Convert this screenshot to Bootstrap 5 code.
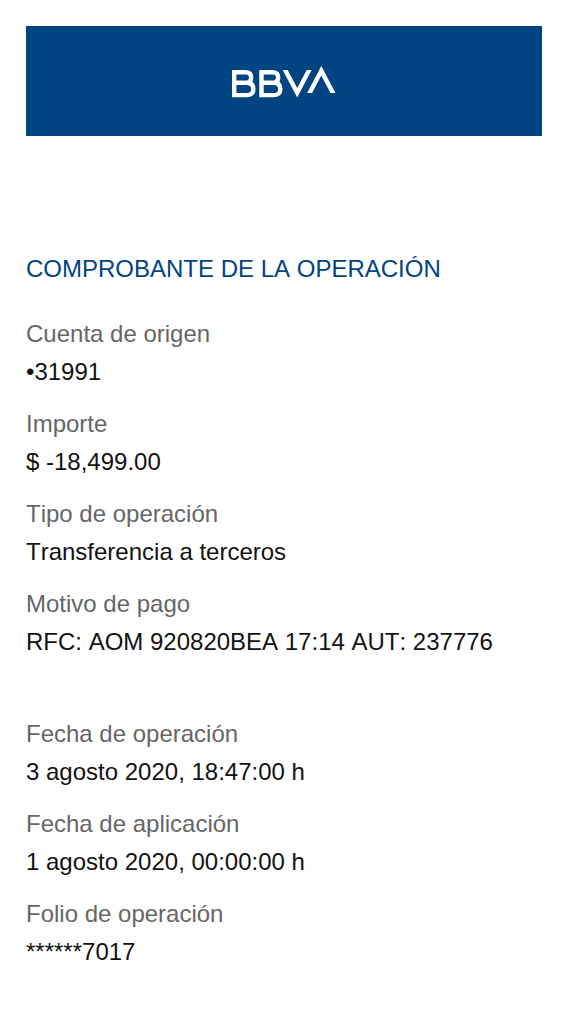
<!DOCTYPE html>
<html lang="es">
<head>
<meta charset="utf-8">
<meta name="viewport" content="width=device-width, initial-scale=1">
<title>Comprobante de la operación</title>
<link href="https://cdn.jsdelivr.net/npm/bootstrap@5.3.0/dist/css/bootstrap.min.css" rel="stylesheet">
<style>
body { font-family: "Liberation Sans", Arial, sans-serif; font-size: 24px; line-height: 38px; font-kerning: none; color: #121212; background: #fff; }
.receipt { padding: 26px; }
.brand-bar { background: #004481; padding: 40px 0 38px; margin-bottom: 114px; }
.receipt-title { font-size: 24px; line-height: 38px; font-weight: 400; color: #004481; margin-bottom: 27px; }
.details dt { font-weight: 400; color: #666; line-height: 38px; }
.details dd { margin-bottom: 14px; }
.details .section-end { margin-bottom: 54px; }
</style>
</head>
<body>
<main class="receipt container-fluid">
  <header class="brand-bar d-flex justify-content-center">
    <svg width="106" height="32" viewBox="0 0 106 32" role="img" aria-label="BBVA" fill="none" stroke="#fff" stroke-width="4.400">
      <defs>
        <clipPath id="clip-down"><rect x="50" y="4" width="34" height="28"/></clipPath>
        <clipPath id="clip-up"><rect x="74" y="0" width="32" height="27"/></clipPath>
      </defs>
      <path d="M3.200 6.200H14.500Q20.200 6.200 20.200 11.500T14.500 16.800H3.200M14.500 16.800H15.500Q22.300 16.800 22.300 23T15.500 29.100H3.200V4"/>
      <path d="M30.500 6.200H41.500Q47.200 6.200 47.200 11.500T41.500 16.800H30.500M41.500 16.800H42.500Q49.300 16.800 49.300 23T42.500 29.100H30.500V4"/>
      <path clip-path="url(#clip-down)" stroke-miterlimit="10" d="M52.100 0L66.200 26.700L80.300 0"/>
      <path clip-path="url(#clip-up)" stroke-miterlimit="10" d="M76.500 31L90.300 4.800L104.100 31"/>
    </svg>
  </header>
  <h1 class="receipt-title">COMPROBANTE DE LA OPERACIÓN</h1>
  <dl class="details mb-0">
    <dt>Cuenta de origen</dt>
    <dd>•31991</dd>
    <dt>Importe</dt>
    <dd>$ -18,499.00</dd>
    <dt>Tipo de operación</dt>
    <dd>Transferencia a terceros</dd>
    <dt>Motivo de pago</dt>
    <dd class="section-end">RFC: AOM 920820BEA 17:14 AUT: 237776</dd>
    <dt>Fecha de operación</dt>
    <dd>3 agosto 2020, 18:47:00 h</dd>
    <dt>Fecha de aplicación</dt>
    <dd>1 agosto 2020, 00:00:00 h</dd>
    <dt>Folio de operación</dt>
    <dd>******7017</dd>
  </dl>
</main>
<script src="https://cdn.jsdelivr.net/npm/bootstrap@5.3.0/dist/js/bootstrap.bundle.min.js"></script>
</body>
</html>
